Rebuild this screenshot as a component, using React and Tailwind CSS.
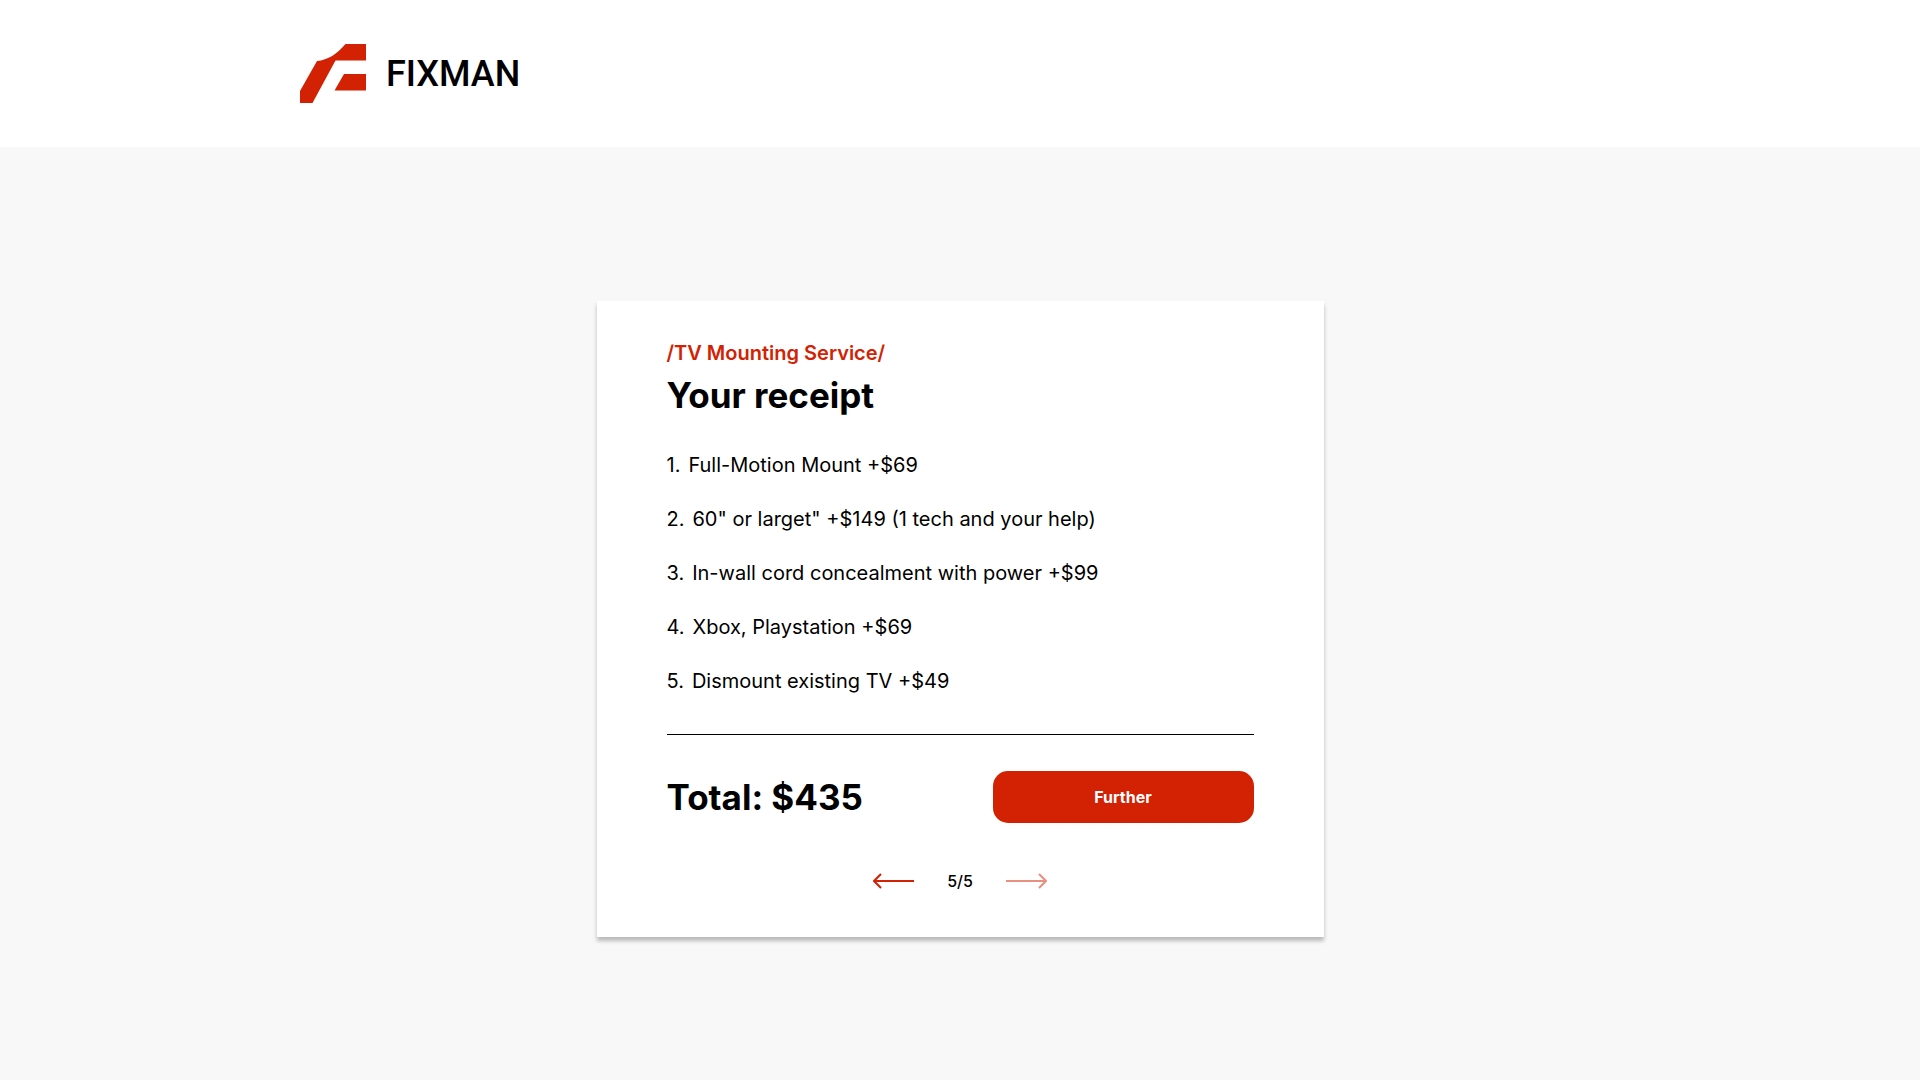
import { useState } from 'react';
import clsx from 'clsx';

const services = [
  { name: 'Full-Motion Mount', price: 69 },
  { name: '60" or larget"', price: 149, note: '(1 tech and your help)' },
  { name: 'In-wall cord concealment with power', price: 99 },
  { name: 'Xbox, Playstation', price: 69 },
  { name: 'Dismount existing TV', price: 49 },
];

const STEPS = 5;

const Logo = () => (
  <svg width="66" height="59" viewBox="0 0 66 59" fill="#d22203" aria-hidden="true">
    <path d="M45.5 0H66V16.5H35.5L12.5 59H0V47L17 17C28 16 37 10 45.5 0Z" />
    <path d="M44 30H66V46.5H34.5Z" />
  </svg>
);

const Arrow = ({ className }) => (
  <svg
    width="42"
    height="16"
    viewBox="0 0 42 16"
    fill="none"
    stroke="#d22203"
    strokeWidth="2"
    className={className}
    aria-hidden="true"
  >
    <path d="M41 8H1M8 1L1 8L8 15" />
  </svg>
);

const Header = () => (
  <header className="bg-white px-4 py-11">
    <a href="#" className="mx-auto flex max-w-[1320px] items-center gap-5">
      <Logo />
      <span className="font-[Roboto,sans-serif] text-4xl font-medium">FIXMAN</span>
    </a>
  </header>
);

const Receipt = () => {
  const [step, setStep] = useState(STEPS);
  const total = services.reduce((sum, service) => sum + service.price, 0);

  return (
    <section className="mx-auto w-full max-w-[727px] bg-white px-[70px] pt-10 pb-11 shadow-[0_4px_4px_rgba(0,0,0,0.25)]">
      <p className="text-xl/6 font-semibold text-[#d22203]">/TV Mounting Service/</p>
      <h1 className="mt-2 text-[35px]/11 font-bold">Your receipt</h1>

      <ol className="mt-9 flex flex-col gap-[30px] text-xl/6">
        {services.map((service, index) => (
          <li key={service.name} className="flex gap-2">
            <span>{index + 1}.</span>
            <span>
              {service.name} +${service.price} {service.note}
            </span>
          </li>
        ))}
      </ol>

      <div className="mt-[41px] flex items-center justify-between border-t border-black pt-9">
        <p className="text-[35px]/11 font-bold">Total: ${total}</p>
        <button type="button" className="h-[52px] w-[261px] rounded-[15px] bg-[#d22203] text-base font-bold text-white">
          Further
        </button>
      </div>

      {/* Step navigation */}
      <div className="mt-[46px] flex items-center justify-center gap-8 text-base/6 font-medium">
        <button type="button" aria-label="Previous" disabled={step === 1} onClick={() => setStep(step - 1)}>
          <Arrow className={clsx(step === 1 && 'opacity-50')} />
        </button>
        <span>
          {step}/{STEPS}
        </span>
        <button type="button" aria-label="Next" disabled={step === STEPS} onClick={() => setStep(step + 1)}>
          <Arrow className={clsx('rotate-180', step === STEPS && 'opacity-50')} />
        </button>
      </div>
    </section>
  );
};

const App = () => (
  <div className="min-h-screen bg-[#f8f8f8] font-[Inter,sans-serif] text-black">
    <Header />
    <main className="px-4 pt-[154px] pb-20">
      <Receipt />
    </main>
  </div>
);

export default App;
